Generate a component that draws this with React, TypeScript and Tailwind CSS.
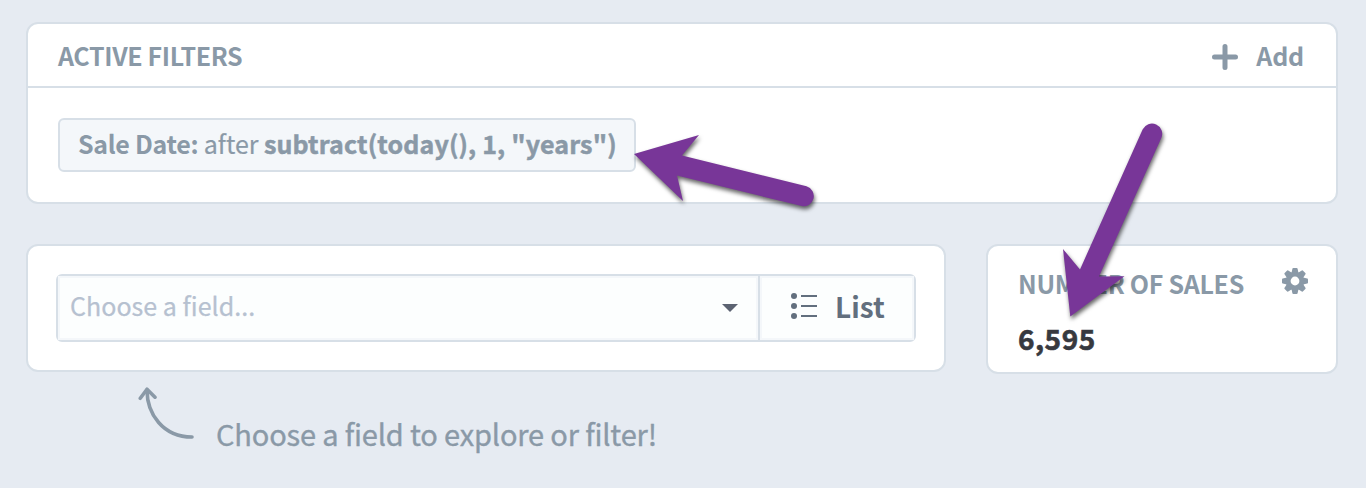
import React from "react";

const GEAR_ANGLES = [0, 45, 90, 135];

function PlusIcon() {
  return (
    <svg width="26" height="26" viewBox="0 0 26 26" className="block" fill="none" stroke="#8a99a7" strokeWidth="5" strokeLinecap="round">
      <path d="M13 2.5V23.5M2.5 13H23.5" />
    </svg>
  );
}

function GearIcon() {
  return (
    <svg width="26" height="26" viewBox="-13 -13 26 26" className="block" fill="#8a99a7">
      {GEAR_ANGLES.map((a) => (
        <path key={a} transform={`rotate(${a})`} d="M-1.6 -13H1.6Q2.4 -13 2.6 -12.2L3.5 -8V8L2.6 12.2Q2.4 13 1.6 13H-1.6Q-2.4 13 -2.6 12.2L-3.5 8V-8L-2.6 -12.2Q-2.4 -13 -1.6 -13Z" />
      ))}
      <circle r="9.2" />
      <circle r="4.4" fill="#fff" />
    </svg>
  );
}

function ListIcon() {
  return (
    <svg width="26" height="26" viewBox="0 0 26 26" className="block" fill="#626f7e">
      <circle cx="3" cy="3" r="3" />
      <circle cx="3" cy="13" r="3" />
      <circle cx="3" cy="23" r="3" />
      <path d="M10 2H26V4H10ZM10 12H26V14H10ZM10 22H26V24H10Z" />
    </svg>
  );
}

function HintArrow() {
  return (
    <svg width="58" height="54" viewBox="0 0 58 54" className="block" fill="none" stroke="#8a99a7" strokeWidth="3.6" strokeLinecap="round" strokeLinejoin="round">
      <path d="M9 4C9 28 25 51 54 51" />
      <path d="M2.3 12.3L9 3.2L17 11.2" />
    </svg>
  );
}

function Pointers() {
  return (
    <svg width="1366" height="488" viewBox="0 0 1366 488" className="pointer-events-none absolute left-0 top-0 [filter:drop-shadow(1px_3px_2px_rgba(0,0,0,0.6))]" fill="#783698">
      <path d="M634 154L699 135L682 155.5L806.5 186.3A10.2 10.2 0 0 1 801.7 206.1L677 175.5L683 201Z" />
      <path d="M1070.3 316.5L1063 249L1080 269.5L1142.6 129.5A10.2 10.2 0 0 1 1161.3 138L1099 276.5L1124.5 276.3Z" />
    </svg>
  );
}

export default function App() {
  return (
    <div className="relative h-[488px] w-[1366px] overflow-hidden bg-[#e6ebf2] px-[26px] pt-[22px] font-['Noto_Sans_CJK_SC',sans-serif] whitespace-nowrap text-[#8a99a7]">
      <section className="h-[182px] w-[1312px] rounded-[12px] border-2 border-[#d7dfe7] bg-white">
        <header className="flex h-[64px] items-center justify-between border-b-2 border-[#d7dfe7] pr-[32px] pl-[30px]">
          <h2 className="text-[25px] leading-[36px] font-bold tracking-[-0.36px]">ACTIVE FILTERS</h2>
          <div className="flex items-center gap-[18px]">
            <div className="pt-[3px]"><PlusIcon /></div>
            <span className="text-[25px] leading-[36px] font-bold tracking-[-0.2px]">Add</span>
          </div>
        </header>
        <div className="px-[30px] pt-[30px]">
          <div className="flex h-[54px] w-[578px] items-center rounded-[6px] border-2 border-[#d7dfe7] bg-[#f4f7fa] pb-[5px] pl-[18px] text-[25px] leading-[36px]">
            <span>
              <b className="tracking-[-0.3px]">Sale Date:</b>
              <span className="tracking-[-0.06px] [-webkit-text-stroke:0.2px_#8a99a7]"> after </span>
              <b className="tracking-[0.15px] [-webkit-text-stroke:0.5px_#8a99a7]">subtract(today(), 1, "years")</b>
            </span>
          </div>
        </div>
      </section>

      <div className="mt-[40px] flex items-start gap-[40px]">
        <section className="h-[128px] w-[920px] rounded-[12px] border-2 border-[#d7dfe7] bg-white p-[28px]">
          <div className="flex h-[68px] w-[860px] rounded-[6px] border-2 border-[#d7dfe7]">
            <div className="flex w-[700px] items-center justify-between bg-[#fcfefe] pr-[20px] pl-[12px] shadow-[inset_0_0_0_2px_#f4f7fa]">
              <span className="pb-[7px] text-[25px] leading-[36px] tracking-[0.04px] text-[#b6c1d0] [-webkit-text-stroke:0.25px_#b6c1d0]">Choose a field...</span>
              <svg width="16" height="8" viewBox="0 0 16 8" className="block" fill="#5c6372"><path d="M0 0H16L8 8Z" /></svg>
            </div>
            <div className="flex flex-1 items-center gap-[18px] border-l-2 border-[#d7dfe7] bg-[#fcfefe] pb-[4px] pl-[31px] shadow-[inset_0_0_0_2px_#f4f7fa]">
              <ListIcon />
              <span className="text-[28px] leading-[40px] font-bold text-[#626f7e]">List</span>
            </div>
          </div>
        </section>

        <section className="h-[130px] w-[352px] rounded-[12px] border-2 border-[#d7dfe7] bg-white pt-[19px] pr-[28px] pl-[30px]">
          <div className="flex items-start justify-between">
            <h2 className="text-[25px] leading-[36px] font-bold tracking-[-0.3px]">NUMBER OF SALES</h2>
            <div className="pt-[3px]"><GearIcon /></div>
          </div>
          <div className="mt-[17px] text-[28px] leading-[40px] font-bold tracking-[0.5px] text-[#37393f] [-webkit-text-stroke:0.6px_#37393f]">6,595</div>
        </section>
      </div>

      <div className="mt-[12px] flex pl-[112px]">
        <HintArrow />
        <span className="mt-[26px] ml-[20px] text-[29px] leading-[42px] tracking-[-0.16px] [-webkit-text-stroke:0.35px_#8a99a7]">Choose a field to explore or filter!</span>
      </div>
      <Pointers />
    </div>
  );
}
